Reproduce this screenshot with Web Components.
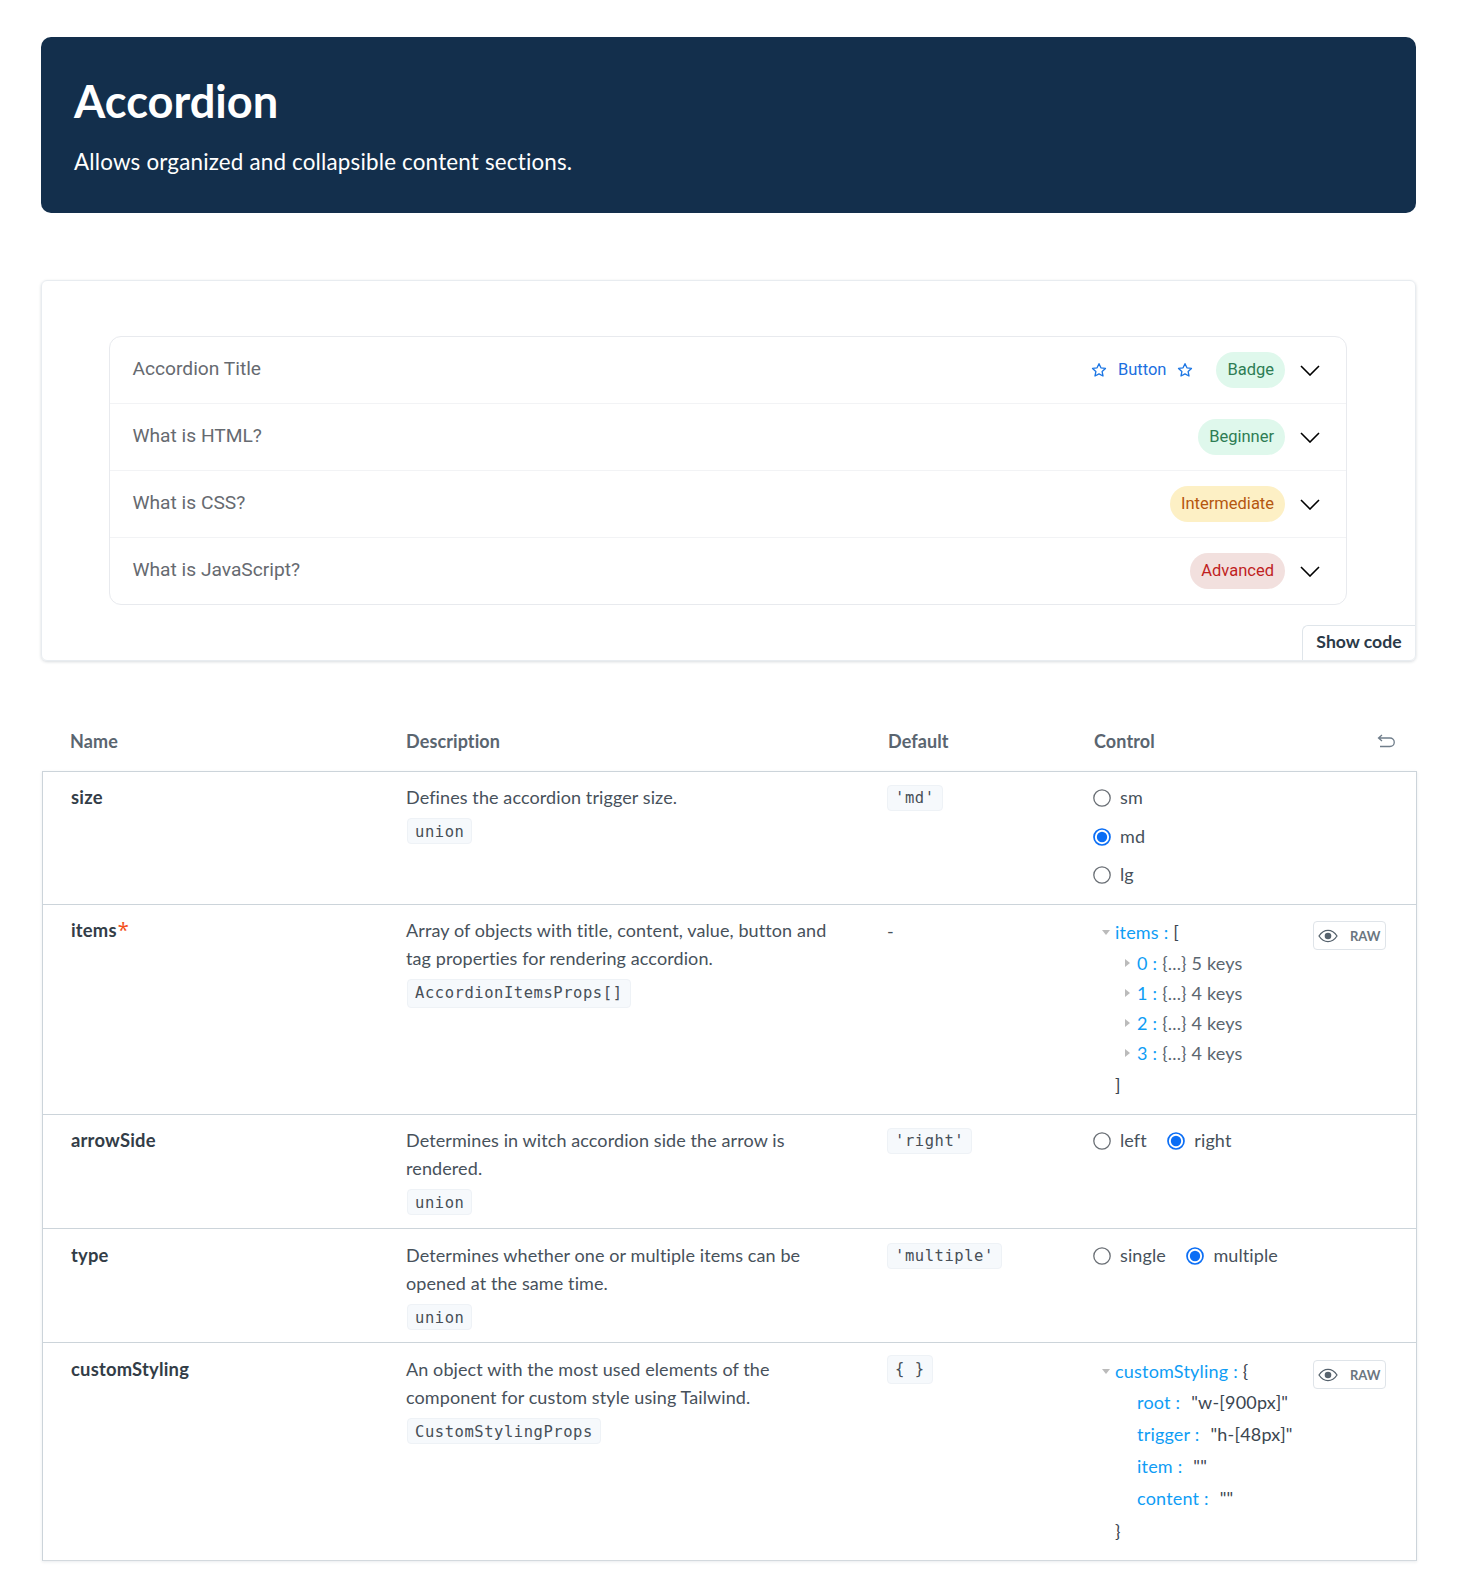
<!DOCTYPE html>
<html lang="en"><head><meta charset="utf-8"><title>Accordion</title>
<style>html,body{margin:0;background:#fff}</style></head><body>
<x-page>
  <x-hero><span slot="title">Accordion</span>Allows organized and collapsible content sections.</x-hero>
  <x-demo-card>
    <x-accordion>
      <x-acc-item label="Accordion Title"><x-link-button>Button</x-link-button><x-badge tone="green">Badge</x-badge></x-acc-item>
      <x-acc-item label="What is HTML?"><x-badge tone="green">Beginner</x-badge></x-acc-item>
      <x-acc-item label="What is CSS?"><x-badge tone="yellow">Intermediate</x-badge></x-acc-item>
      <x-acc-item label="What is JavaScript?" last><x-badge tone="red">Advanced</x-badge></x-acc-item>
    </x-accordion>
  </x-demo-card>
  <x-prop-table>
    <x-prop-row h="133" name="size">
      <div slot="desc">Defines the accordion trigger size.<x-chip>union</x-chip></div>
      <x-chip slot="def" first>'md'</x-chip>
      <x-radio-group slot="control" vertical><x-radio>sm</x-radio><x-radio checked>md</x-radio><x-radio>lg</x-radio></x-radio-group>
    </x-prop-row>
    <x-prop-row h="210" name="items" required>
      <div slot="desc">Array of objects with title, content, value, button and tag properties for rendering accordion.<x-chip tall>AccordionItemsProps[]</x-chip></div>
      <div slot="def">-</div>
      <x-json slot="control" pad="0">
        <x-jl arrow="down" key="items" gap="1">[</x-jl>
        <x-jl depth="1" arrow="right" key="0" muted>{...} 5 keys</x-jl>
        <x-jl depth="1" arrow="right" key="1" muted>{...} 4 keys</x-jl>
        <x-jl depth="1" arrow="right" key="2" muted>{...} 4 keys</x-jl>
        <x-jl depth="1" arrow="right" key="3" muted gap="2">{...} 4 keys</x-jl>
        <x-jl>]</x-jl>
      </x-json>
    </x-prop-row>
    <x-prop-row h="114" name="arrowSide">
      <div slot="desc">Determines in witch accordion side the arrow is rendered.<x-chip>union</x-chip></div>
      <x-chip slot="def" first>'right'</x-chip>
      <x-radio-group slot="control"><x-radio>left</x-radio><x-radio checked>right</x-radio></x-radio-group>
    </x-prop-row>
    <x-prop-row h="114" name="type" top="13">
      <div slot="desc">Determines whether one or multiple items can be opened at the same time.<x-chip>union</x-chip></div>
      <x-chip slot="def" first>'multiple'</x-chip>
      <x-radio-group slot="control"><x-radio>single</x-radio><x-radio checked>multiple</x-radio></x-radio-group>
    </x-prop-row>
    <x-prop-row h="217" name="customStyling" last top="13">
      <div slot="desc">An object with the most used elements of the component for custom style using Tailwind.<x-chip>CustomStylingProps</x-chip></div>
      <x-chip slot="def" first tall>{ }</x-chip>
      <x-json slot="control" pad="0" tall>
        <x-jl arrow="down" key="customStyling">{</x-jl>
        <x-jl depth="1" nobox key="root" val>"w-[900px]"</x-jl>
        <x-jl depth="1" nobox key="trigger" val>"h-[48px]"</x-jl>
        <x-jl depth="1" nobox key="item" val>""</x-jl>
        <x-jl depth="1" nobox key="content" val gap="2">""</x-jl>
        <x-jl>}</x-jl>
      </x-json>
    </x-prop-row>
  </x-prop-table>
</x-page>
<script>
const SANS = 'Lato,"Open Sans",sans-serif';
const MONO = '"DejaVu Sans Mono","Liberation Mono",monospace';
const ROBOTO = 'Roboto,"Liberation Sans",sans-serif';
function def(name, html, extra){
  customElements.define(name, class extends HTMLElement{
    constructor(){super();this.attachShadow({mode:'open'}).innerHTML=typeof html==='function'?html(this):html;}
    connectedCallback(){ if(extra) extra(this); }
  });
}
def('x-page',`<style>:host{display:block;padding:37px 46px 24px 41px;font-family:${SANS};color:#3c4650;box-sizing:border-box}</style><slot></slot>`);
def('x-hero',`<style>
:host{display:block;background:#132f4c;border-radius:10px;color:#fff;height:176px;padding:35px 33px 0;box-sizing:border-box}
.t{font-size:45.2px;line-height:58px;font-weight:700}
.s{font-size:22.4px;line-height:28px;margin-top:18px;letter-spacing:.18px}
</style><div class="t"><slot name="title"></slot></div><div class="s"><slot></slot></div>`);
def('x-demo-card',`<style>
:host{display:block;position:relative;margin-top:67px;height:381px;box-sizing:border-box;border:1px solid #e8ecf0;border-radius:6px;padding:55px 68px 55px 67px;box-shadow:0 1px 3px rgba(40,60,80,.18)}
.code{position:absolute;right:0;bottom:0;width:113px;height:35px;box-sizing:border-box;border:1px solid #dfe5ea;border-width:1px 0 0 1px;border-top-left-radius:6px;display:flex;align-items:center;justify-content:center;padding-bottom:3px;font-size:17.6px;font-weight:700;color:#2b3a48}
</style><slot></slot><div class="code">Show code</div>`);
def('x-accordion',`<style>:host{display:block;border:1px solid #e8eaee;border-radius:12px;height:269px;box-sizing:border-box}</style><slot></slot>`);
def('x-acc-item',el=>`<style>
:host{display:flex;align-items:center;height:67px;box-sizing:border-box;padding:0 26px 0 22.5px;border-bottom:1px solid ${el.hasAttribute('last')?'transparent':'#f2f3f5'};font-family:${ROBOTO}}
.l{flex:1;font-size:19.2px;color:#666a70;margin-top:-3px}
.r{display:flex;align-items:center;gap:23px}
svg{margin-left:15px;flex:none}
</style><div class="l">${el.getAttribute('label')}</div><div class="r"><slot></slot></div>
<svg width="20" height="11" viewBox="0 0 20 11" fill="none" stroke="#000" stroke-width="1.6"><path d="M1 1l9 9 9-9"/></svg>`);
const TONES={green:['#dff8ec','#2e7d54'],yellow:['#fdf0c5','#b5570f'],red:['#f2e0de','#c01f1f']};
def('x-badge',el=>{const t=TONES[el.getAttribute('tone')];return `<style>:host{display:flex;align-items:center;height:36px;padding:0 11px 2px;box-sizing:border-box;border-radius:18px;background:${t[0]};color:${t[1]};font-size:16.5px;font-family:${ROBOTO}}</style><slot></slot>`});
const STAR=`<svg width="16" height="16" viewBox="0 0 24 24" fill="none" stroke="#1c76e4" stroke-width="2" stroke-linejoin="round"><path d="M12 2.5l2.9 6.2 6.8.9-5 4.7 1.3 6.7-6-3.3-6 3.3 1.3-6.7-5-4.7 6.8-.9z"/></svg>`;
def('x-link-button',`<style>:host{display:flex;align-items:center;gap:11px;color:#1c6fe0;font-size:16.5px;font-family:${ROBOTO}}span{margin-top:-2px}</style>${STAR}<span><slot></slot></span>${STAR}`);
def('x-prop-table',`<style>
:host{display:block;margin:39px -1px 0 1px}
.head{display:grid;grid-template-columns:336px 481px 206px 1fr;height:71px;align-items:center;box-sizing:border-box;padding-top:11px;font-weight:700;font-size:18px;letter-spacing:.1px;color:#5a6570}
.head div:first-child{padding-left:28px}.head div:nth-child(2){padding-left:28px}.head div:nth-child(3){padding-left:29px}.head div:nth-child(4){padding-left:29px;display:flex;justify-content:space-between;align-items:center;padding-right:22px}
.body{border:1px solid #ccd4da;border-bottom-color:#d3d9de;box-shadow:0 1px 3px rgba(40,60,80,.1)}
</style><div class="head"><div>Name</div><div>Description</div><div>Default</div><div>Control
<svg width="18" height="14" viewBox="0 0 18 14" fill="none" stroke="#6f7d8a" stroke-width="1.3"><path d="M5 1L1.5 4l3.500 3M1.500 4H13a3.700 3.700 0 010 8.500H3"/></svg></div></div><div class="body"><slot></slot></div>`);
def('x-prop-row',el=>{const top=+(el.getAttribute('top')||12);return `<style>
:host{display:grid;grid-template-columns:335px 481px 206px 1fr;min-height:${el.getAttribute('h')}px;box-sizing:border-box;border-bottom:1px solid ${el.hasAttribute('last')?'transparent':'#ccd4da'};font-size:18px;line-height:28px;letter-spacing:.1px;color:#47515b}
.c{padding:${top-1}px 0 0 28px;min-width:0}
.dc{padding-top:${top}px}
.n{font-weight:700;color:#333d47;font-size:18.4px;letter-spacing:.2px}
.star{color:#f4511e;font:400 20px/0 "Noto Sans",sans-serif;margin-left:1px}
.d{padding-right:28px;line-height:28px}
.ctl{padding:${top}px 30px 0 28px;display:flex;min-width:0}
</style><div class="c n">${el.getAttribute('name')}${el.hasAttribute('required')?'<span class="star">*</span>':''}</div>
<div class="c d"><slot name="desc"></slot></div><div class="c dc"><slot name="def"></slot></div><div class="ctl"><slot name="control"></slot></div>`});
def('x-chip',el=>{const first=el.hasAttribute('first'),tall=el.hasAttribute('tall');return `<style>
:host{display:block;width:fit-content;box-sizing:border-box;height:${tall?29:26}px;margin-top:${first?(tall?-1:1):7}px;margin-left:${first?0:1}px;padding:0 7px;border:1px solid #eef2f6;border-radius:4px;background:#f6f9fc;font-family:${MONO};font-size:15.5px;line-height:${tall?27:first?25:26}px;letter-spacing:.55px;color:#474f57}
</style><slot></slot>`});
def('x-radio-group',el=>`<style>:host{display:flex;${el.hasAttribute('vertical')?'flex-direction:column;gap:10.67px;':'gap:20.5px;'}}</style><slot></slot>`);
def('x-radio',el=>`<style>:host{display:flex;align-items:center;gap:9px;height:28px;width:fit-content;font-size:18px;letter-spacing:.1px;color:#47515b}svg{flex:none}span{margin-top:-2px}</style>
<svg width="18" height="18" viewBox="0 0 18 18">${el.hasAttribute('checked')
?'<circle cx="9" cy="9" r="8" fill="#fff" stroke="#0b6ef5" stroke-width="1.700"/><circle cx="9" cy="9" r="5.200" fill="#0b6ef5"/>'
:'<circle cx="9" cy="9" r="8.200" fill="#fff" stroke="#6a6f75" stroke-width="1.300"/>'}</svg><span><slot></slot></span>`);
def('x-json',el=>`<style>
:host{flex:1;display:flex;min-width:0}
.l{flex:1;padding:${el.getAttribute('pad')}px 0 0 9px;font-size:18px;letter-spacing:.2px}
.raw{flex:none;width:73px;height:29px;margin-top:${+el.getAttribute('pad')+4}px;box-sizing:border-box;border:1px solid #dfe4e9;border-radius:4px;display:flex;align-items:center;padding-left:4px;gap:12px;font-size:13px;font-weight:700;color:#6b7680;letter-spacing:0;font-family:${SANS}}
</style><div class="l"><slot></slot></div><div class="raw">
<svg width="20" height="14" viewBox="0 0 20 14" fill="none"><path d="M1 7c2.500-3.800 5.500-5.700 9-5.700S16.500 3.200 19 7c-2.500 3.800-5.500 5.700-9 5.700S3.500 10.800 1 7z" stroke="#56626d" stroke-width="1.300"/><circle cx="10" cy="7" r="3.300" fill="#56626d"/></svg>RAW</div>`);
def('x-jl',el=>{
  const d=+(el.getAttribute('depth')||0),a=el.getAttribute('arrow'),k=el.getAttribute('key');
  const inJsonTall=!!el.closest('x-json[tall]');
  const tri=a==='down'?'<svg width="8" height="5" viewBox="0 0 8 5"><path d="M0 0h8L4 5z" fill="#bbb"/></svg>':a==='right'?'<svg width="5" height="8" viewBox="0 0 5 8"><path d="M0 0v8l5-4z" fill="#bbb"/></svg>':'';
  return `<style>
:host{display:flex;align-items:center;height:${inJsonTall&&d?32:30}px;margin-bottom:${el.getAttribute('gap')||0}px;padding-left:${d*22}px;white-space:pre;color:#3c4650}
.a{width:13px;flex:none;display:flex;align-items:center;${a==='right'?'padding-left:1px;box-sizing:border-box;':''}}
.k{color:#0f9df5}
.v{margin-left:11px;color:#3c4650}
.m{margin-left:5px;color:#5b6670}
.p{margin-left:5px}
</style><span class="a">${tri}</span>${k!=null?`<span class="k">${k} :</span>`:''}<span class="${el.hasAttribute('val')?'v':el.hasAttribute('muted')?'m':k!=null?'p':''}"><slot></slot></span>`;
});
</script>
</body></html>
